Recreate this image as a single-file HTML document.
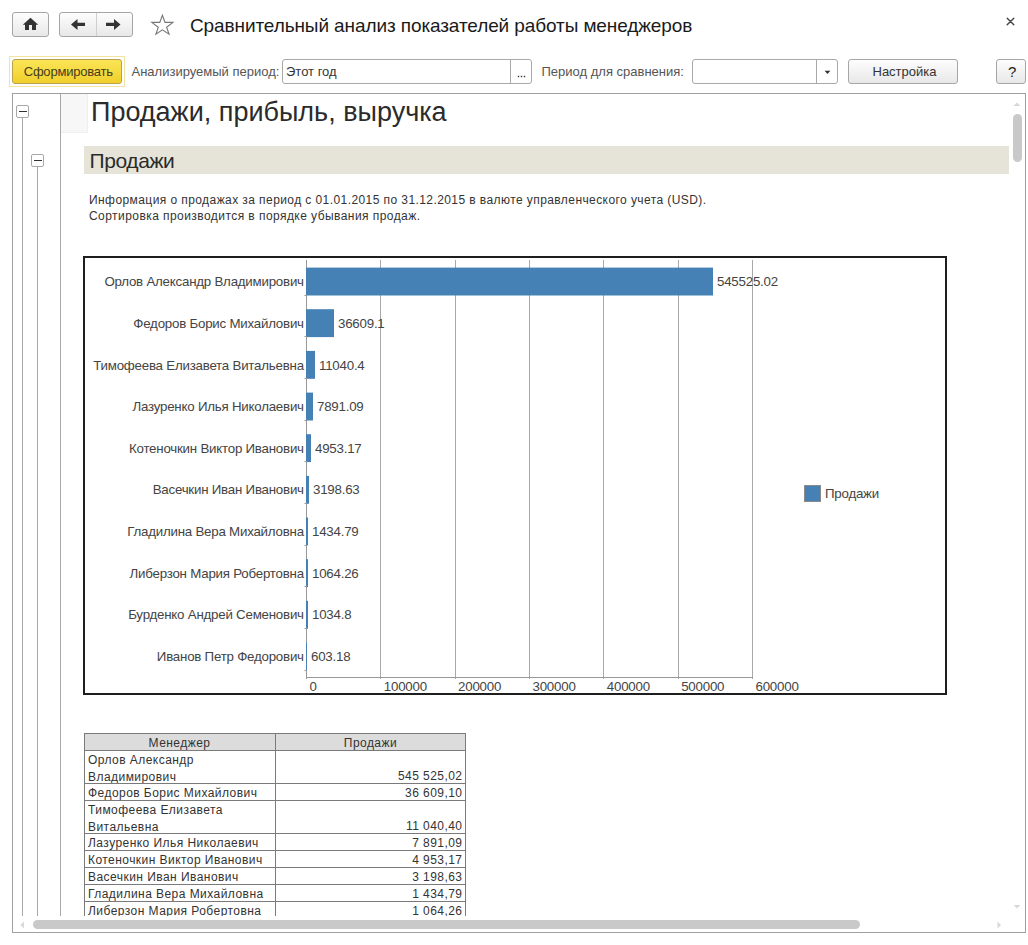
<!DOCTYPE html>
<html><head><meta charset="utf-8">
<style>
*{margin:0;padding:0;box-sizing:border-box}
html,body{width:1028px;height:945px;overflow:hidden;background:#fff}
body{position:relative;font-family:"Liberation Sans",sans-serif;color:#333}
.a{position:absolute}
.btn{position:absolute;border:1px solid #a6a6a6;border-radius:3px;background:linear-gradient(#fdfdfd,#e8e8e8)}
.t{position:absolute;white-space:nowrap;line-height:1}
.box{position:absolute;width:13px;height:13px;border:1px solid #a8a8a8;border-radius:2px;background:#fff}
.box:after{content:"";position:absolute;left:2px;top:5px;width:8px;height:1px;background:#333}
</style></head><body>

<div class="btn" style="left:12px;top:12px;width:37px;height:25px"></div>
<div class="btn" style="left:59px;top:12px;width:74px;height:25px"></div>
<div class="a" style="left:96px;top:13px;width:1px;height:23px;background:#cfcfcf"></div>
<svg class="a" style="left:0;top:0" width="200" height="45">
<polygon points="22.8,24.8 30.5,17.8 38.2,24.8 36,24.8 36,30 32,30 32,25 29,25 29,30 25,30 25,24.8" fill="#333"/>
<polygon points="71,24.4 77.5,19 77.5,22.8 85,22.8 85,26 77.5,26 77.5,30" fill="#333"/>
<polygon points="120.5,24.4 114,19 114,22.8 106,22.8 106,26 114,26 114,30" fill="#333"/>
<polygon points="162.4,15.3 165,22.4 173,22.4 166.6,27.3 169.1,34.2 162.4,29.8 155.9,34.2 158.3,27.3 151.8,22.4 159.8,22.4" fill="none" stroke="#777" stroke-width="1.1"/>
</svg>
<div class="t" style="top:15.91px;font-size:19px;color:#1a1a1a;letter-spacing:-0.1px;left:190px;">Сравнительный анализ показателей работы менеджеров</div>
<svg class="a" style="left:1000px;top:10px" width="20" height="20">
<path d="M7.2,8.2 L13.8,14.8 M13.8,8.2 L7.2,14.8" stroke="#444" stroke-width="1.4" stroke-linecap="round"/>
</svg>
<div class="a" style="left:9px;top:56px;width:116px;height:31px;border:1px solid #f2e3a0"></div>
<div class="a" style="left:12px;top:59px;width:110px;height:25px;border:1px solid #b8a24a;border-radius:3px;background:linear-gradient(#fbe556,#f0cf2c)"></div>
<div class="t" style="top:64.99px;font-size:13px;color:#453d1a;letter-spacing:-0.2px;left:23.7px;">Сформировать</div>
<div class="t" style="top:64.99px;font-size:13px;color:#555;left:131.5px;">Анализируемый период:</div>
<div class="a" style="left:282px;top:59px;width:250px;height:25px;border:1px solid #a9a9a9;border-radius:3px;background:#fff"></div>
<div class="a" style="left:510px;top:60px;width:1px;height:23px;background:#a9a9a9"></div>
<div class="t" style="top:64.99px;font-size:13px;color:#333;left:286px;">Этот год</div>
<svg class="a" style="left:510px;top:70px" width="20" height="12"><rect x="7.8" y="5.8" width="1.4" height="1.4" fill="#333"/><rect x="10.8" y="5.8" width="1.4" height="1.4" fill="#333"/><rect x="13.8" y="5.8" width="1.4" height="1.4" fill="#333"/></svg>
<div class="t" style="top:64.99px;font-size:13px;color:#555;left:541.5px;">Период для сравнения:</div>
<div class="a" style="left:692px;top:59px;width:146px;height:25px;border:1px solid #a9a9a9;border-radius:3px;background:#fff"></div>
<div class="a" style="left:816px;top:60px;width:1px;height:23px;background:#a9a9a9"></div>
<svg class="a" style="left:821px;top:68px" width="14" height="10"><polygon points="3.6,2.8 9.4,2.8 6.5,6" fill="#333"/></svg>
<div class="btn" style="left:848px;top:59px;width:110px;height:25px"></div>
<div class="t" style="top:64.99px;font-size:13px;color:#333;left:872.5px;">Настройка</div>
<div class="btn" style="left:996px;top:59px;width:30px;height:25px"></div>
<div class="t" style="top:64.30px;font-size:15px;color:#222;left:1008px;">?</div>
<div class="a" style="left:12px;top:93px;width:1014px;height:840px;border:1px solid #a0a0a0;background:#fff"></div>
<div class="a" style="left:13px;top:94px;width:1012px;height:822px;overflow:hidden">
<div class="a" style="left:0;top:0;width:1028px;height:945px;transform:translate(-13px,-94px)">
<div class="a" style="left:60px;top:94px;width:1px;height:822px;background:#a8a8a8"></div>
<div class="a" style="left:61px;top:94px;width:27px;height:39px;background:#f7f7f7;border-right:1px solid #efefef;border-bottom:1px solid #efefef"></div>
<div class="a" style="left:22px;top:117px;width:1px;height:800px;background:#a8a8a8"></div>
<div class="a" style="left:37px;top:166px;width:1px;height:760px;background:#a8a8a8"></div>
<div class="box" style="left:16px;top:105px"></div>
<div class="box" style="left:31px;top:154px"></div>
<div class="t" style="top:99.34px;font-size:27px;color:#2b2b2b;left:91px;">Продажи, прибыль, выручка</div>
<div class="a" style="left:84px;top:146px;width:925px;height:28px;background:#e6e4d9"></div>
<div class="t" style="top:150.22px;font-size:21px;color:#2b2b2b;letter-spacing:-0.4px;left:89.5px;">Продажи</div>
<div class="t" style="top:194.34px;font-size:12px;color:#333;letter-spacing:0.42px;left:89px;">Информация о продажах за период с 01.01.2015 по 31.12.2015 в валюте управленческого учета (USD).</div>
<div class="t" style="top:210.34px;font-size:12px;color:#333;letter-spacing:0.44px;left:89px;">Сортировка производится в порядке убывания продаж.</div>
<div class="a" style="left:83px;top:256px;width:864px;height:439px;border:2px solid #1e1e1e"></div>
<svg class="a" style="left:0;top:0" width="1028" height="945">
<line x1="380.5" y1="260" x2="380.5" y2="679" stroke="#a8a8a8" stroke-width="1"/>
<line x1="455.5" y1="260" x2="455.5" y2="679" stroke="#a8a8a8" stroke-width="1"/>
<line x1="529.5" y1="260" x2="529.5" y2="679" stroke="#a8a8a8" stroke-width="1"/>
<line x1="603.5" y1="260" x2="603.5" y2="679" stroke="#a8a8a8" stroke-width="1"/>
<line x1="678.5" y1="260" x2="678.5" y2="679" stroke="#a8a8a8" stroke-width="1"/>
<line x1="752.5" y1="260" x2="752.5" y2="679" stroke="#a8a8a8" stroke-width="1"/>
<line x1="306.5" y1="260" x2="306.5" y2="679" stroke="#999" stroke-width="1"/>
<line x1="306" y1="677.5" x2="753" y2="677.5" stroke="#999" stroke-width="1"/>
<rect x="306" y="267.6" width="407" height="27.9" fill="#4581b5"/>
<line x1="304.5" y1="295.5" x2="307" y2="295.5" stroke="#999" stroke-width="1"/>
<rect x="306" y="309.2" width="28" height="27.9" fill="#4581b5"/>
<line x1="304.5" y1="336.5" x2="307" y2="336.5" stroke="#999" stroke-width="1"/>
<rect x="306" y="350.9" width="9" height="27.9" fill="#4581b5"/>
<line x1="304.5" y1="378.5" x2="307" y2="378.5" stroke="#999" stroke-width="1"/>
<rect x="306" y="392.6" width="7" height="27.9" fill="#4581b5"/>
<line x1="304.5" y1="420.5" x2="307" y2="420.5" stroke="#999" stroke-width="1"/>
<rect x="306" y="434.2" width="5" height="27.9" fill="#4581b5"/>
<line x1="304.5" y1="461.5" x2="307" y2="461.5" stroke="#999" stroke-width="1"/>
<rect x="306" y="475.9" width="3" height="27.9" fill="#4581b5"/>
<line x1="304.5" y1="503.5" x2="307" y2="503.5" stroke="#999" stroke-width="1"/>
<rect x="306" y="517.5" width="2" height="27.9" fill="#4581b5"/>
<line x1="304.5" y1="545.5" x2="307" y2="545.5" stroke="#999" stroke-width="1"/>
<rect x="306" y="559.2" width="2" height="27.9" fill="#4581b5"/>
<line x1="304.5" y1="586.5" x2="307" y2="586.5" stroke="#999" stroke-width="1"/>
<rect x="306" y="600.8" width="2" height="27.9" fill="#4581b5"/>
<line x1="304.5" y1="628.5" x2="307" y2="628.5" stroke="#999" stroke-width="1"/>
<rect x="306" y="642.5" width="1" height="27.9" fill="#4581b5"/>
<line x1="304.5" y1="670.5" x2="307" y2="670.5" stroke="#999" stroke-width="1"/>
<rect x="804.5" y="485.5" width="16" height="16" fill="#4581b5" stroke="#8a8a8a" stroke-width="1"/>
</svg>
<div class="t" style="top:275.24px;font-size:13.3px;color:#444;letter-spacing:-0.22px;right:724.2px;">Орлов Александр Владимирович</div>
<div class="t" style="top:275.24px;font-size:13.3px;color:#444;letter-spacing:-0.22px;left:717px;">545525.02</div>
<div class="t" style="top:316.89px;font-size:13.3px;color:#444;letter-spacing:-0.22px;right:724.2px;">Федоров Борис Михайлович</div>
<div class="t" style="top:316.89px;font-size:13.3px;color:#444;letter-spacing:-0.22px;left:338px;">36609.1</div>
<div class="t" style="top:358.54px;font-size:13.3px;color:#444;letter-spacing:-0.22px;right:724.2px;">Тимофеева Елизавета Витальевна</div>
<div class="t" style="top:358.54px;font-size:13.3px;color:#444;letter-spacing:-0.22px;left:319px;">11040.4</div>
<div class="t" style="top:400.19px;font-size:13.3px;color:#444;letter-spacing:-0.22px;right:724.2px;">Лазуренко Илья Николаевич</div>
<div class="t" style="top:400.19px;font-size:13.3px;color:#444;letter-spacing:-0.22px;left:317px;">7891.09</div>
<div class="t" style="top:441.84px;font-size:13.3px;color:#444;letter-spacing:-0.22px;right:724.2px;">Котеночкин Виктор Иванович</div>
<div class="t" style="top:441.84px;font-size:13.3px;color:#444;letter-spacing:-0.22px;left:315px;">4953.17</div>
<div class="t" style="top:483.49px;font-size:13.3px;color:#444;letter-spacing:-0.22px;right:724.2px;">Васечкин Иван Иванович</div>
<div class="t" style="top:483.49px;font-size:13.3px;color:#444;letter-spacing:-0.22px;left:313px;">3198.63</div>
<div class="t" style="top:525.14px;font-size:13.3px;color:#444;letter-spacing:-0.22px;right:724.2px;">Гладилина Вера Михайловна</div>
<div class="t" style="top:525.14px;font-size:13.3px;color:#444;letter-spacing:-0.22px;left:312px;">1434.79</div>
<div class="t" style="top:566.79px;font-size:13.3px;color:#444;letter-spacing:-0.22px;right:724.2px;">Либерзон Мария Робертовна</div>
<div class="t" style="top:566.79px;font-size:13.3px;color:#444;letter-spacing:-0.22px;left:312px;">1064.26</div>
<div class="t" style="top:608.44px;font-size:13.3px;color:#444;letter-spacing:-0.22px;right:724.2px;">Бурденко Андрей Семенович</div>
<div class="t" style="top:608.44px;font-size:13.3px;color:#444;letter-spacing:-0.22px;left:312px;">1034.8</div>
<div class="t" style="top:650.09px;font-size:13.3px;color:#444;letter-spacing:-0.22px;right:724.2px;">Иванов Петр Федорович</div>
<div class="t" style="top:650.09px;font-size:13.3px;color:#444;letter-spacing:-0.22px;left:311px;">603.18</div>
<div class="t" style="top:679.74px;font-size:13.3px;color:#444;letter-spacing:-0.22px;left:309.4px;">0</div>
<div class="t" style="top:679.74px;font-size:13.3px;color:#444;letter-spacing:-0.22px;left:383.8px;">100000</div>
<div class="t" style="top:679.74px;font-size:13.3px;color:#444;letter-spacing:-0.22px;left:458.1px;">200000</div>
<div class="t" style="top:679.74px;font-size:13.3px;color:#444;letter-spacing:-0.22px;left:532.5px;">300000</div>
<div class="t" style="top:679.74px;font-size:13.3px;color:#444;letter-spacing:-0.22px;left:606.8px;">400000</div>
<div class="t" style="top:679.74px;font-size:13.3px;color:#444;letter-spacing:-0.22px;left:681.2px;">500000</div>
<div class="t" style="top:679.74px;font-size:13.3px;color:#444;letter-spacing:-0.22px;left:755.5px;">600000</div>
<div class="t" style="top:486.74px;font-size:13.3px;color:#444;letter-spacing:-0.22px;left:825px;">Продажи</div>
<div class="a" style="left:84px;top:733px;width:382px;height:18px;background:#dcdcdc;border:1px solid #7a7a7a"></div>
<div class="t" style="top:736.84px;font-size:12px;color:#333;letter-spacing:0.45px;left:84px;width:191px;text-align:center;">Менеджер</div>
<div class="t" style="top:736.84px;font-size:12px;color:#333;letter-spacing:0.45px;left:275px;width:191px;text-align:center;">Продажи</div>
<div class="a" style="left:84px;top:750px;width:382px;height:34px;border:1px solid #7a7a7a"></div>
<div class="t" style="top:754.34px;font-size:12px;color:#333;letter-spacing:0.45px;left:88px;">Орлов Александр</div>
<div class="t" style="top:770.84px;font-size:12px;color:#333;letter-spacing:0.45px;left:88px;">Владимирович</div>
<div class="t" style="top:770.34px;font-size:12px;color:#333;letter-spacing:0.45px;right:565.5px;">545 525,02</div>
<div class="a" style="left:84px;top:783px;width:382px;height:18px;border:1px solid #7a7a7a"></div>
<div class="t" style="top:787.34px;font-size:12px;color:#333;letter-spacing:0.45px;left:88px;">Федоров Борис Михайлович</div>
<div class="t" style="top:787.34px;font-size:12px;color:#333;letter-spacing:0.45px;right:565.5px;">36 609,10</div>
<div class="a" style="left:84px;top:800px;width:382px;height:34px;border:1px solid #7a7a7a"></div>
<div class="t" style="top:804.34px;font-size:12px;color:#333;letter-spacing:0.45px;left:88px;">Тимофеева Елизавета</div>
<div class="t" style="top:820.84px;font-size:12px;color:#333;letter-spacing:0.45px;left:88px;">Витальевна</div>
<div class="t" style="top:820.34px;font-size:12px;color:#333;letter-spacing:0.45px;right:565.5px;">11 040,40</div>
<div class="a" style="left:84px;top:833px;width:382px;height:18px;border:1px solid #7a7a7a"></div>
<div class="t" style="top:837.34px;font-size:12px;color:#333;letter-spacing:0.45px;left:88px;">Лазуренко Илья Николаевич</div>
<div class="t" style="top:837.34px;font-size:12px;color:#333;letter-spacing:0.45px;right:565.5px;">7 891,09</div>
<div class="a" style="left:84px;top:850px;width:382px;height:18px;border:1px solid #7a7a7a"></div>
<div class="t" style="top:854.34px;font-size:12px;color:#333;letter-spacing:0.45px;left:88px;">Котеночкин Виктор Иванович</div>
<div class="t" style="top:854.34px;font-size:12px;color:#333;letter-spacing:0.45px;right:565.5px;">4 953,17</div>
<div class="a" style="left:84px;top:867px;width:382px;height:18px;border:1px solid #7a7a7a"></div>
<div class="t" style="top:871.34px;font-size:12px;color:#333;letter-spacing:0.45px;left:88px;">Васечкин Иван Иванович</div>
<div class="t" style="top:871.34px;font-size:12px;color:#333;letter-spacing:0.45px;right:565.5px;">3 198,63</div>
<div class="a" style="left:84px;top:884px;width:382px;height:18px;border:1px solid #7a7a7a"></div>
<div class="t" style="top:888.34px;font-size:12px;color:#333;letter-spacing:0.45px;left:88px;">Гладилина Вера Михайловна</div>
<div class="t" style="top:888.34px;font-size:12px;color:#333;letter-spacing:0.45px;right:565.5px;">1 434,79</div>
<div class="a" style="left:84px;top:901px;width:382px;height:18px;border:1px solid #7a7a7a"></div>
<div class="t" style="top:905.34px;font-size:12px;color:#333;letter-spacing:0.45px;left:88px;">Либерзон Мария Робертовна</div>
<div class="t" style="top:905.34px;font-size:12px;color:#333;letter-spacing:0.45px;right:565.5px;">1 064,26</div>
<div class="a" style="left:84px;top:918px;width:382px;height:18px;border:1px solid #7a7a7a"></div>
<div class="t" style="top:922.34px;font-size:12px;color:#333;letter-spacing:0.45px;left:88px;">Бурденко Андрей Семенович</div>
<div class="t" style="top:922.34px;font-size:12px;color:#333;letter-spacing:0.45px;right:565.5px;">1 034,80</div>
<div class="a" style="left:275px;top:733px;width:1px;height:200px;background:#7a7a7a"></div>
</div></div>
<div class="a" style="left:1013px;top:114px;width:9px;height:48px;border-radius:5px;background:#c9c9c9"></div>
<svg class="a" style="left:1010px;top:100px" width="14" height="8"><polygon points="3.5,6 7,2.5 10.5,6" fill="#d8d8d8"/></svg>
<svg class="a" style="left:1010px;top:903px" width="14" height="8"><polygon points="3.5,2 7,5.5 10.5,2" fill="#d8d8d8"/></svg>
<div class="a" style="left:33px;top:920px;width:827px;height:9px;border-radius:5px;background:#c9c9c9"></div>
<svg class="a" style="left:18px;top:918px" width="10" height="14"><polygon points="6,3.5 2.5,7 6,10.5" fill="#d8d8d8"/></svg>
<svg class="a" style="left:995px;top:918px" width="10" height="14"><polygon points="2.5,3.5 6,7 2.5,10.5" fill="#d8d8d8"/></svg>
</body></html>
